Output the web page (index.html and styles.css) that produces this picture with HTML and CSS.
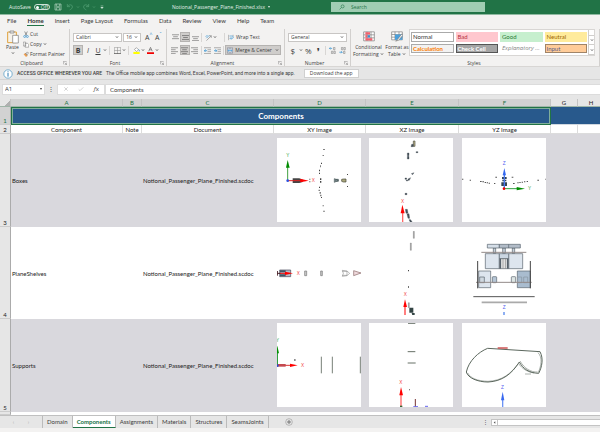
FILE: index.html
```html
<!DOCTYPE html>
<html lang="en">
<head>
<meta charset="utf-8">
<title>Notional_Passenger_Plane_Finished.xlsx</title>
<link rel="stylesheet" href="styles.css">
</head>
<body>
<svg class="defs" aria-hidden="true">
  <symbol id="chev" viewBox="0 0 9 9"><path d="M2 3l2.5 3L7 3" fill="none" stroke="currentColor" stroke-width="1.5"/></symbol>
  <symbol id="launch" viewBox="0 0 12 12"><path d="M1 10V1h10M5 5l5 5M11 5v6H5" fill="none" stroke="#777" stroke-width="1.5"/></symbol>
  <symbol id="lines-t" viewBox="0 0 18 18"><path d="M0 2h18M3 7h12M0 12h18" stroke="#666" stroke-width="1.6"/></symbol>
  <symbol id="lines-m" viewBox="0 0 18 18"><path d="M0 4h18M3 9h12M0 14h18" stroke="#555" stroke-width="1.6"/></symbol>
  <symbol id="lines-b" viewBox="0 0 18 18"><path d="M0 7h18M3 12h12M0 17h18" stroke="#666" stroke-width="1.6"/></symbol>
  <symbol id="lines-l" viewBox="0 0 18 18"><path d="M0 2h18M0 7h12M0 12h18M0 17h12" stroke="#666" stroke-width="1.6"/></symbol>
  <symbol id="lines-c" viewBox="0 0 18 18"><path d="M0 2h18M3 7h12M0 12h18M3 17h12" stroke="#555" stroke-width="1.6"/></symbol>
  <symbol id="lines-r" viewBox="0 0 18 18"><path d="M0 2h18M6 7h12M0 12h18M6 17h12" stroke="#666" stroke-width="1.6"/></symbol>
  <symbol id="indent-out" viewBox="0 0 18 18"><path d="M0 2h18M9 7h9M9 12h9M0 17h18" stroke="#777" stroke-width="1.5"/><path d="M8 9.500H1M4 6L1 9.500 4 13" fill="none" stroke="#2e8fd0" stroke-width="2"/></symbol>
  <symbol id="indent-in" viewBox="0 0 18 18"><path d="M0 2h18M9 7h9M9 12h9M0 17h18" stroke="#777" stroke-width="1.5"/><path d="M0 9.500h7M4 6l3 3.500L4 13" fill="none" stroke="#2e8fd0" stroke-width="2"/></symbol>
</svg>

<header class="titlebar">
  <label class="autosave">AutoSave <input type="checkbox" class="sr" aria-label="AutoSave"><span class="toggle">Off</span></label>
  <button class="tbtn" aria-label="Save"><svg viewBox="0 0 24 24"><path d="M3 3h18v18H3zM7 3v7h10V3M7 21v-7h10v7" fill="none" stroke="#b9d8c6" stroke-width="2"/></svg></button>
  <button class="tbtn more" aria-label="Undo"><svg viewBox="0 0 24 24"><path d="M4 3v8h8M4 11C9 3 20 4 19 12c0 4-4 7-8 9" fill="none" stroke="#4d9a70" stroke-width="2.500"/></svg><svg class="ch"><use href="#chev"/></svg></button>
  <button class="tbtn more" aria-label="Redo"><svg viewBox="0 0 24 24"><path d="M20 3v8h-8M20 11C15 3 4 4 5 12c0 4 4 7 8 9" fill="none" stroke="#4d9a70" stroke-width="2.500"/></svg><svg class="ch"><use href="#chev"/></svg></button>
  <button class="tbtn" aria-label="Customize"><svg viewBox="0 0 24 24"><path d="M8 8h8M8 12h8l-4 5z" fill="#d5e8dd" stroke="#d5e8dd"/></svg></button>
  <div class="doc">Notional_Passenger_Plane_Finished.xlsx <span class="tri"></span></div>
  <label class="search"><svg viewBox="0 0 20 20"><path d="M2 18l6-6" stroke="#217346" stroke-width="2"/><circle cx="12" cy="8" r="5" fill="none" stroke="#217346" stroke-width="2"/></svg><input type="search" placeholder="Search" aria-label="Search"></label>
</header>

<nav class="tabs">
  <a href="#">File</a><a href="#" class="on">Home</a><a href="#">Insert</a><a href="#">Page Layout</a><a href="#">Formulas</a><a href="#">Data</a><a href="#">Review</a><a href="#">View</a><a href="#">Help</a><a href="#">Team</a>
</nav>

<section class="ribbon">
  <div class="group clip">
    <div class="body">
      <button class="paste"><svg class="big" viewBox="0 0 36 42"><path d="M2 6h26v32H2z" fill="#f6f2ea" stroke="#dfa23c" stroke-width="3"/><path d="M9 3h12v6H9z" fill="#eee" stroke="#777" stroke-width="2"/><path d="M17 16h17v23H17z" fill="#fff" stroke="#777" stroke-width="2"/></svg><span>Paste</span><svg class="ch"><use href="#chev"/></svg></button>
      <div class="stack">
        <button><svg class="ic" viewBox="0 0 18 20"><path d="M5 1l6 12M13 1L7 13" stroke="#666" stroke-width="2"/><circle cx="5" cy="16" r="3" fill="none" stroke="#2e8fd0" stroke-width="2"/><circle cx="13" cy="16" r="3" fill="none" stroke="#2e8fd0" stroke-width="2"/></svg>Cut</button>
        <button><svg class="ic" viewBox="0 0 20 20"><path d="M1 2h8v13H1zM7 6h8l4 4v9H7z" fill="#fff" stroke="#666" stroke-width="1.600"/></svg>Copy <svg class="ch"><use href="#chev"/></svg></button>
        <button><svg class="ic" viewBox="0 0 20 20"><path d="M2 9l8 9 5-4-7-9z" fill="#f0a050"/><path d="M7 6l8 8M10 7l3-5 5 2-3 6z" fill="#fff" stroke="#666" stroke-width="1.600"/></svg>Format Painter</button>
      </div>
    </div>
    <div class="cap"><span>Clipboard</span><svg><use href="#launch"/></svg></div>
  </div>

  <div class="group font">
    <div class="body rows">
      <div class="row">
        <span class="combo face"><select aria-label="Font"><option>Calibri</option></select><svg class="ch"><use href="#chev"/></svg></span>
        <span class="combo size"><select aria-label="Font size"><option>16</option></select><svg class="ch"><use href="#chev"/></svg></span>
        <button class="b10 grow">A<sup>^</sup></button><button class="b10 shrink">A<sup>ˇ</sup></button>
      </div>
      <div class="row">
        <button class="b10 pressed"><b>B</b></button><button class="b10"><i>I</i></button><button class="b10"><u>U</u></button><svg class="ch"><use href="#chev"/></svg><i class="sep"></i>
        <button class="b10" aria-label="Borders"><svg viewBox="0 0 20 20"><path d="M1 1h18v17M10 1v18M1 10h18M1 1v18" fill="none" stroke="#888" stroke-width="1.500"/><path d="M0 19h20" stroke="#333" stroke-width="2"/></svg></button><svg class="ch"><use href="#chev"/></svg><i class="sep"></i>
        <button class="b10" aria-label="Fill color"><svg viewBox="0 0 20 20"><path d="M4 7l6-5 6 6-6 5z" fill="#fff" stroke="#777" stroke-width="1.600"/><path d="M16 7c3 3 3 5 1 6" fill="none" stroke="#2e8fd0" stroke-width="2"/><path d="M1 14h18v6H1z" fill="#ff0"/></svg></button><svg class="ch"><use href="#chev"/></svg>
        <button class="b10" aria-label="Font color"><svg viewBox="0 0 20 20"><path d="M5 12l5-11 5 11M7 8h6" fill="none" stroke="#666" stroke-width="2"/><path d="M0 15h20v5H0z" fill="#f00000"/></svg></button><svg class="ch"><use href="#chev"/></svg>
      </div>
    </div>
    <div class="cap"><span>Font</span><svg><use href="#launch"/></svg></div>
  </div>

  <div class="group align">
    <div class="body rows">
      <div class="row">
        <button class="b10" aria-label="Top align"><svg><use href="#lines-t"/></svg></button><button class="b10 pressed" aria-label="Middle align"><svg><use href="#lines-m"/></svg></button><button class="b10" aria-label="Bottom align"><svg><use href="#lines-b"/></svg></button><i class="sep"></i>
        <button class="b10" aria-label="Orientation"><svg viewBox="0 0 20 20"><path d="M4 19L18 5M12 5h6v6" fill="none" stroke="#888" stroke-width="2"/><path d="M2 8l5-5M4 12l8-8" stroke="#2e8fd0" stroke-width="2"/></svg></button><svg class="ch"><use href="#chev"/></svg><i class="sep push"></i>
        <button class="wide"><svg class="ic" viewBox="0 0 20 20"><path d="M2 1v18M17 1v5" stroke="#777" stroke-width="1.600"/><path d="M5 5h9c5 0 5 8 0 8H8M11 9l-4 4 4 4" fill="none" stroke="#2e8fd0" stroke-width="2"/></svg>Wrap Text</button>
      </div>
      <div class="row">
        <button class="b10" aria-label="Align left"><svg><use href="#lines-l"/></svg></button><button class="b10 pressed" aria-label="Center"><svg><use href="#lines-c"/></svg></button><button class="b10" aria-label="Align right"><svg><use href="#lines-r"/></svg></button><i class="sep"></i>
        <button class="b10" aria-label="Decrease indent"><svg><use href="#indent-out"/></svg></button><button class="b10" aria-label="Increase indent"><svg><use href="#indent-in"/></svg></button><i class="sep"></i>
        <button class="wide pressed"><svg class="ic" viewBox="0 0 20 20"><path d="M1 1h18v18H1zM1 5h18M1 15h18M10 1v4M10 15v4" fill="#e8f3fa" stroke="#667" stroke-width="1.500"/><path d="M3 10h14M6 7l-3 3 3 3M14 7l3 3-3 3" fill="none" stroke="#2e8fd0" stroke-width="2"/></svg>Merge &amp; Center <svg class="ch"><use href="#chev"/></svg></button>
      </div>
    </div>
    <div class="cap"><span>Alignment</span><svg><use href="#launch"/></svg></div>
  </div>

  <div class="group number">
    <div class="body rows">
      <div class="row"><span class="combo fmt"><select aria-label="Number format"><option>General</option></select><svg class="ch"><use href="#chev"/></svg></span></div>
      <div class="row">
        <button class="b10 glyph">$</button><svg class="ch wide-ch"><use href="#chev"/></svg><button class="b10 glyph">%</button><button class="b10 glyph"><b>❜</b></button><i class="sep"></i>
        <button class="b10" aria-label="Increase decimal"><svg viewBox="0 0 20 20"><path d="M9 4H1M4 1L1 4l3 3" fill="none" stroke="#2e8fd0" stroke-width="2"/><path d="M13 1h4v7h-4zM7 12h4v7H7zM14 12h4v7h-4z" fill="none" stroke="#777" stroke-width="1.500"/></svg></button>
        <button class="b10" aria-label="Decrease decimal"><svg viewBox="0 0 20 20"><path d="M1 15h8M6 12l3 3-3 3" fill="none" stroke="#2e8fd0" stroke-width="2"/><path d="M7 1h4v7H7zM14 1h4v7h-4zM13 12h4v7h-4z" fill="none" stroke="#777" stroke-width="1.500"/></svg></button>
      </div>
    </div>
    <div class="cap"><span>Number</span><svg><use href="#launch"/></svg></div>
  </div>

  <div class="group styles">
    <div class="body">
      <button class="tall"><svg viewBox="0 0 36 32"><path d="M2 2h32v27H2zM2 11h32M2 20h32M12 2v27M24 2v27" fill="#fff" stroke="#777" stroke-width="2"/><path d="M7 3h14v7H7zM7 21h21v7H7z" fill="#f4606c"/><path d="M7 12h7v7H7z" fill="#f4606c"/><path d="M14 12h7v7h-7z" fill="#3c8fd0"/></svg><span>Conditional<br>Formatting <svg class="ch"><use href="#chev"/></svg></span></button>
      <button class="tall table"><svg viewBox="0 0 36 32"><path d="M2 2h32v24H2zM2 10h32M2 18h32M12 2v24M24 2v24" fill="#fff" stroke="#777" stroke-width="2"/><path d="M12 10h22v16H12z" fill="#4aa0dc"/><path d="M33 8L20 24l-6 6 9-3L35 13z" fill="#fff" stroke="#777" stroke-width="2"/></svg><span>Format as<br>Table <svg class="ch"><use href="#chev"/></svg></span></button>
      <div class="gallery">
        <div class="cells">
          <button class="s-normal">Normal</button><button class="s-bad">Bad</button><button class="s-good">Good</button><button class="s-neutral">Neutral</button>
          <button class="s-calc">Calculation</button><button class="s-check">Check Cell</button><button class="s-expl">Explanatory ...</button><button class="s-input">Input</button>
        </div>
        <div class="scroll"><button aria-label="Previous styles"></button><button aria-label="Next styles"><svg class="ch"><use href="#chev"/></svg></button><button aria-label="More styles"><svg class="ch"><use href="#chev"/></svg></button></div>
      </div>
    </div>
    <div class="cap"><span>Styles</span></div>
  </div>
</section>

<aside class="notice">
  <svg viewBox="0 0 30 30"><circle cx="15" cy="15" r="12.500" fill="#fff" stroke="#3c8fc0" stroke-width="2"/><path d="M15 7v3M15 12v11" stroke="#2878b0" stroke-width="3"/></svg>
  <strong>ACCESS OFFICE WHEREVER YOU ARE</strong>
  <span>The Office mobile app combines Word, Excel, PowerPoint, and more into a single app.</span>
  <button>Download the app</button>
</aside>

<section class="formula">
  <label class="name"><input value="A1" aria-label="Name box"><span class="tri"></span></label>
  <span class="dots">⋮</span>
  <div class="fx"><button aria-label="Cancel"><svg viewBox="0 0 18 18"><path d="M4 4l10 10M14 4L4 14" stroke="#bbb" stroke-width="2"/></svg></button><button aria-label="Enter"><svg viewBox="0 0 18 18"><path d="M2 10l4 4L16 4" fill="none" stroke="#bbb" stroke-width="2"/></svg></button><button><i>f</i>x</button></div>
  <input class="entry" value="Components" aria-label="Formula bar">
</section>

<main>
<table class="sheet">
  <colgroup><col class="c-row"><col class="c-a"><col class="c-b"><col class="c-c"><col class="c-d"><col class="c-e"><col class="c-f"><col class="c-g"><col></colgroup>
  <thead><tr><th class="corner"></th><th class="sel">A</th><th class="sel">B</th><th class="sel">C</th><th class="sel">D</th><th class="sel">E</th><th class="sel">F</th><th>G</th><th>H</th></tr></thead>
  <tbody>
    <tr class="banner"><th class="sel">1</th><td colspan="6" class="active">Components</td><td></td><td></td></tr>
    <tr class="heads"><th>2</th><td>Component</td><td>Note</td><td>Document</td><td>XY Image</td><td>XZ Image</td><td>YZ Image</td><td></td><td></td></tr>
    <tr class="item odd"><th>3</th><td>Boxes</td><td></td><td>Notional_Passenger_Plane_Finished.scdoc</td>
      <td class="pic"><svg viewBox="21 24 252 252">
        <g fill="#444"><path d="M160 57h4v3h-4zM158 75h3v3h-3zM153 98h3v4h-3zM151 106h2v6h-2zM147 119h3v5h-3zM147 128h3v4h-3zM150 145h4v5h-4zM150 153h4v5h-4zM147 170h3v4h-3zM146 179h3v4h-3zM149 186h3v5h-3zM151 194h3v5h-3zM153 201h3v3h-3zM158 226h3v3h-3zM160 242h4v3h-4zM118 146h3v3h-3zM118 154h3v3h-3zM231 132h3v3h-3zM231 168h3v3h-3z"/></g>
        <path d="M68 145h20l10 4v7l-10 3H68z" fill="#444"/><path d="M193 146l12 5-12 6zM197 148h8v6h-8z" fill="#9aa7ae" stroke="#455" stroke-width="2"/><path d="M215 148l5-1h8v9h-8l-5-2z" fill="#aaa77c" stroke="#443" stroke-width="2"/>
        <path d="M53 152v-42" stroke="#40a040" stroke-width="3"/><path d="M48 113l5-23 6 23z" fill="#008c00"/><path d="M53 152h40" stroke="#e02020" stroke-width="3"/><path d="M91 146l25 6-25 5z" fill="#f00"/><circle cx="53" cy="152" r="4" fill="#2b50e0"/>
        <text class="y" x="49" y="80">Y</text><text class="x" x="125" y="156">X</text></svg></td>
      <td class="pic"><svg viewBox="297 24 252 252">
        <path d="M430 33h5v16h-5z" fill="#b8b08a" stroke="#554" stroke-width="2"/><path d="M425 43h5v7h-7zM438 65h6v3h-6zM412 69h5v8h-5zM412 79h5v8h-5zM405 144h5v4h-5zM409 150h4v3h-4zM414 147l8-4-4 8h-4zM424 131l8-3-4 6zM405 190h6v4h-6zM406 238h6l2 12h-6zM411 252l6-1 2 14h-5zM417 269h5l5 8h-6z" fill="#455058" stroke="#455058"/>
        <path d="M398 276v-32" stroke="#f66" stroke-width="4"/><path d="M392 250l5-26 7 26z" fill="#f00"/><text class="x" x="393" y="218">X</text></svg></td>
      <td class="pic"><svg viewBox="96 24 252 252">
        <path d="M96 146h4v3h-4zM119 149h4v3h-4zM150 153h5v3h-5zM157 154h5v3h-5zM164 156h4v3h-4zM170 157h4v3h-4zM176 158h4v3h-4zM192 159h4v3h-4zM196 140h5v3h-5zM245 140h5v3h-5zM249 159h5v3h-5zM262 157h4v3h-4zM268 156h4v3h-4zM275 155h4v3h-4zM282 154h4v3h-4zM290 153h4v3h-4zM322 149h5v3h-5zM346 146h3v3h-3z" fill="#555"/>
        <path d="M216 141h14v6h-14zM217 149h12v5h-12zM214 157h17v11h-17z" fill="#345"/><path d="M223 174v-42" stroke="#4878f0" stroke-width="4"/><path d="M218 136l5-22 5 22z" fill="#3468f0"/><path d="M223 176h40" stroke="#30a040" stroke-width="3"/><path d="M260 171l25 5-25 5z" fill="#008c00"/><circle cx="222" cy="176" r="4" fill="#e00"/>
        <text class="z" x="218" y="106">Z</text><text class="y" x="294" y="181">Y</text></svg></td><td></td><td></td></tr>
    <tr class="item"><th>4</th><td>PlaneShelves</td><td></td><td>Notional_Passenger_Plane_Finished.scdoc</td>
      <td class="pic"><svg viewBox="21 17 252 252">
        <path d="M29 134h33v20H29z" fill="#b4bcc8" stroke="#445" stroke-width="2"/><path d="M30 135h17v6H30zM30 147h17v6H30z" fill="#456"/><path d="M22 137v14M22 144h10" stroke="#401820" stroke-width="3"/><path d="M30 144h22" stroke="#e11" stroke-width="3"/><path d="M45 139l24 5-24 5z" fill="#f00"/>
        <path d="M104 137h6v14h-6zM152 137h5v14h-5z" fill="#ccc" stroke="#777" stroke-width="2"/><path d="M217 135l14 2 8 7-8 7-14 2 3-9zM217 138h14v12h-14" fill="#fff" stroke="#777" stroke-width="1.500"/><path d="M251 136l22 7-22 8z" fill="#efd9dc" stroke="#866" stroke-width="2"/><text class="x" x="80" y="149">X</text></svg></td>
      <td class="pic"><svg viewBox="297 17 252 252">
        <path d="M430 18h3v21h-3zM421 53h3v22h-3zM415 232h3v15h-3z" fill="#999" stroke="#777"/><path d="M414 134h3v4h-3zM414 183h3v4h-3z" fill="#444"/><path d="M418 247h12v15h-12zM425 263h9v7h-7z" fill="#344"/><path d="M405 269v-29" stroke="#f66" stroke-width="5"/><path d="M400 245l5-23 6 23z" fill="#f00"/><text class="x" x="401" y="212">X</text></svg></td>
      <td class="pic"><svg viewBox="96 17 252 252">
        <g stroke="#56616b" stroke-width="2"><path d="M190 68h7v16h-7zM218 68h8v16h-8zM247 68h7v16h-7z" fill="#c8d2dc"/><path d="M172 57h36v11h-36z" fill="#d5dee8"/><path d="M208 57h63v11h-63z" fill="#b2bcc8"/><path d="M236 57v11" /><path d="M166 85h42v45h-42zM236 85h42v45h-42z" fill="#dde5ee"/><path d="M208 85h28v15h-28z" fill="#cbd6e2"/><path d="M208 100h28v30h-28z" fill="#eee"/><path d="M211 100v30M233 100v30" stroke-width="5"/><path d="M219 100v30M226 100v30" stroke="#777"/>
        <path d="M146 137h36v50h-36z" fill="#dde5ee"/><path d="M262 137h39v50h-39z" fill="#a9bccf"/><path d="M149 155h14v17h-14z" fill="#cfd8e0"/><rect x="187" y="154" width="13" height="18" rx="2" fill="#b6c6d6"/><rect x="244" y="154" width="13" height="18" rx="2" fill="#dde5e4"/><path d="M263 155h12v17h-12zM281 155h12v17h-12z" fill="#a9bccf" stroke="#8895a0"/></g>
        <path d="M154 81h135M138 171h167" stroke="#928a88" stroke-width="3"/><path d="M143 107v82M301 107v82" stroke="#444" stroke-width="3"/><path d="M130 214h184" stroke="#555" stroke-width="3"/><path d="M155 231h136" stroke="#aaa" stroke-width="5"/><text class="z" x="218" y="250">Z</text><path d="M222 260v10" stroke="#78a0f0" stroke-width="5"/></svg></td><td></td><td></td></tr>
    <tr class="item odd"><th>5</th><td>Supports</td><td></td><td>Notional_Passenger_Plane_Finished.scdoc</td>
      <td class="pic"><svg viewBox="21 16 252 252">
        <path d="M154 117v50M187 117v50M271 117v50" stroke="#788078" stroke-width="3"/><path d="M72 125h5v4h-5z" fill="#666"/><path d="M22 143v-40" stroke="#30a040" stroke-width="4"/><path d="M17 107l5-23 5 23z" fill="#009000"/><path d="M22 143h40" stroke="#d33" stroke-width="3"/><path d="M24 139h23v8H24z" fill="#c44a50"/><path d="M60 138l23 5-23 5z" fill="#f00"/><circle cx="22" cy="144" r="4" fill="#34c"/><text class="y" x="18" y="72">Y</text><text class="x" x="93" y="148">X</text></svg></td>
      <td class="pic"><svg viewBox="297 16 252 252">
        <path d="M414 17h22M413 102h23M413 136h24" stroke="#677067" stroke-width="3"/><path d="M417 215h3v3h-3z" fill="#555"/><path d="M436 244v23" stroke="#733" stroke-width="3"/><path d="M430 267h14M465 266h9" stroke="#66e" stroke-width="3"/><path d="M393 267v-36" stroke="#f66" stroke-width="4"/><path d="M388 233l5-25 6 25z" fill="#f00"/><path d="M390 266h7" stroke="#363" stroke-width="4"/><text class="x" x="388" y="199">X</text></svg></td>
      <td class="pic"><svg viewBox="96 16 252 252">
        <g fill="none" stroke="#5b675d"><path d="M173 92C145 103 116 130 109 163C114 181 143 193 174 193C217 191 245 169 268 133C279 153 297 166 326 167C336 148 341 123 330 102Z" stroke-width="3"/><path d="M266 138C276 153 292 163 312 166M270 130C283 152 302 164 323 163M324 105C338 119 334 144 325 164M113 166C122 182 142 190 174 191C215 189 241 170 263 140M285 169h18" stroke-width="1.500"/></g>
        <path d="M203 91h30" stroke="#c84040" stroke-width="4"/><path d="M218 268v-25" stroke="#6c94f5" stroke-width="4"/><path d="M213 248l5-26 5 26z" fill="#3868f0"/><text class="z" x="213" y="214">Z</text></svg></td><td></td><td></td></tr>
    <tr class="tail"><th></th><td></td><td></td><td></td><td></td><td></td><td></td><td></td><td></td></tr>
  </tbody>
</table>
</main>

<footer>
  <div class="sheets">
    <div class="arrows"><button aria-label="Previous sheet">‹</button><button aria-label="Next sheet">›</button></div>
    <a href="#">Domain</a><a href="#" class="on">Components</a><a href="#">Assignments</a><a href="#">Materials</a><a href="#">Structures</a><a href="#">SeamsJoints</a>
    <button class="add" aria-label="New sheet"><svg viewBox="0 0 24 24"><circle cx="12" cy="12" r="10" fill="none" stroke="#888" stroke-width="1.500"/><path d="M12 6v12M6 12h12" stroke="#666" stroke-width="2.500"/></svg></button>
    <span class="dots">⋮</span>
    <div class="hscroll"><button aria-label="Scroll left"><svg viewBox="0 0 12 12"><path d="M8 3v6L4 6z" fill="#555"/></svg></button></div>
  </div>
  <div class="status"></div>
</footer>
</body>
</html>
```
FILE: styles.css
```css
* { box-sizing: border-box; }
body { margin: 0; min-height: 100vh; display: flex; flex-direction: column; overflow: hidden; background: #e6e6e6; color: #3c3c3c; font: 5px/7px "Open Sans", "Noto Sans", sans-serif; }
button, input, select { font: inherit; color: inherit; margin: 0; padding: 0; border: 0; background: none; appearance: none; outline: 0; min-width: 0; border-radius: 0; }
button { display: flex; align-items: center; white-space: nowrap; }
a { color: inherit; text-decoration: none; }
svg { display: block; flex: none; }
.defs { position: absolute; width: 0; height: 0; }
.sr { position: absolute; opacity: 0; }
.ch { width: 4px; height: 4px; }
.tri { display: inline-block; border: 1px solid transparent; border-top: 2px solid currentColor; border-bottom: 0; }

.titlebar { display: flex; align-items: center; height: 15px; padding-left: 9px; background: #217346; border-bottom: 1px solid #8fb9a1; color: #e4f0e9; }
.autosave { display: flex; align-items: center; gap: 3px; width: 45px; }
.toggle { display: flex; align-items: center; width: 16px; height: 6px; border: 1px solid #cfe3d8; border-radius: 3px; }
.toggle::before { content: ""; width: 3px; height: 3px; margin: 0 2px 0 1px; border-radius: 50%; background: #fff; }
.tbtn { width: 12px; color: #4d9a70; }
.tbtn.more { gap: 2px; width: 16px; }
.tbtn svg:first-child { width: 8px; height: 8px; }
.doc { display: flex; align-items: center; gap: 3px; width: 150px; margin-left: auto; }
.search { display: flex; align-items: center; gap: 6px; width: 154px; height: 10px; margin: 0 115px 0 9px; padding-left: 8px; background: #a0cdb3; color: #217346; }
.search svg { width: 6px; height: 6px; }
.search input { flex: 1; }
.search input::placeholder { color: #217346; opacity: 1; }

.tabs { display: flex; gap: 11px; height: 12px; padding: 1px 7px 0; background: #f3f2f1; font-family: Lato, sans-serif; font-size: 6px; line-height: 9px; }
.tabs .on { height: 10px; border-bottom: 1px solid #217346; color: #333; font-weight: 700; }

.ribbon { display: flex; height: 40px; padding-top: 2px; background: #f3f2f1; border-bottom: 1px solid #d8d6d4; }
.group { display: flex; flex-direction: column; border-right: 1px solid #d2d0ce; }
.clip { width: 70px; }
.font { width: 97px; }
.align { width: 118px; }
.number { width: 66px; }
.styles { flex: 1; }
.body { display: flex; flex: 1; }
.cap { display: flex; align-items: center; height: 6px; padding-right: 2px; }
.cap span { flex: 1; text-align: center; }
.cap svg { width: 4px; height: 4px; }
.paste { flex-direction: column; width: 23px; padding-left: 2px; }
.big { width: 12px; height: 14px; margin-top: 1px; }
.stack { display: flex; flex-direction: column; }
.stack button { height: 10px; gap: 1px; }
.ic { width: 6px; height: 7px; }
.rows { flex-direction: column; gap: 3px; padding: 3px 3px 0; }
.row { display: flex; align-items: center; height: 10px; }
.combo { display: flex; align-items: center; height: 9px; padding: 0 2px; background: #fff; border: 1px solid #c8c6c4; }
.combo select { flex: 1; }
.face { width: 51px; margin-right: 1px; }
.size { width: 18px; margin-right: 3px; }
.fmt { width: 59px; }
.b10 { justify-content: center; width: 10px; height: 10px; font-size: 7px; }
.b10 svg { width: 7px; height: 7px; }
.b10 sup { font-size: 5px; line-height: 5px; align-self: flex-start; color: #2e8fd0; }
.pressed { background: #cfcdcb; border: 1px solid #b5b3b1; }
.sep { width: 1px; height: 9px; margin: 0 1px; background: #d8d6d4; }
.font .sep, .number .sep { margin: 0 2px; }
.sep.push { margin-left: 7px; }
.wide-ch { margin: 0 1px; }
.wide { gap: 2px; height: 10px; padding: 0 1px; border: 1px solid transparent; }
.wide.pressed { border-color: #b5b3b1; }
.wide .ch { margin: 0 1px; }
.glyph { font-size: 8px; }
.tall { flex-direction: column; width: 35px; padding-top: 2px; }
.tall.table { width: 22px; }
.tall > svg { width: 12px; height: 11px; margin-bottom: 2px; }
.tall span { text-align: center; }
.tall span svg { display: inline-block; }
.styles .body { padding-right: 4px; }
.gallery { display: flex; flex: 1; align-self: flex-start; height: 27px; margin-left: 1px; background: #fff; border: 1px solid #d8d6d4; font-family: Lato, sans-serif; }
.cells { display: grid; flex: 1; grid-template-columns: repeat(4, 1fr); gap: 2px; padding: 2px 1px; }
.cells button { padding: 0 1px; font-size: 6px; border: 1px solid transparent; }
.cells .s-normal { border-color: #aaa; color: #333; }
.cells .s-bad { background: #ffc7ce; color: #b5323e; }
.cells .s-good { background: #c6efce; color: #267a35; }
.cells .s-neutral { background: #ffeb9c; color: #9c6500; }
.cells .s-calc { background: #f2f2f2; border-color: #aaa; color: #fa7d00; font-weight: 700; }
.cells .s-check { background: #a5a5a5; border-color: #555; color: #fff; font-weight: 700; }
.cells .s-expl { color: #7f7f7f; font-family: "Open Sans", sans-serif; font-style: italic; }
.cells .s-input { background: #ffcc99; border-color: #a08468; color: #5b5b86; }
.scroll { display: grid; width: 6px; border-left: 1px solid #d0cecc; }
.scroll button { border-bottom: 1px solid #d0cecc; justify-content: center; }

.notice { display: flex; align-items: center; gap: 4px; height: 13px; padding: 1px 0 0 3px; background: #e6e6e6; border-bottom: 1px solid #d4d4d4; font-family: Roboto, sans-serif; }
.notice svg { width: 10px; height: 10px; }
.notice strong { font-weight: 500; }
.notice button { height: 9px; margin-left: 5px; padding: 0 5px; background: #fff; border: 1px solid #d0d0d0; font-family: "Open Sans", sans-serif; }

.formula { display: flex; align-items: center; height: 19px; padding: 0 0 1px 2px; font-size: 6px; }
.formula > * { height: 11px; background: #fff; border: 1px solid #dcdcdc; }
.formula .name { display: flex; align-items: center; width: 43px; padding: 0 2px; }
.name input { flex: 1; }
.formula .dots { width: 12px; background: none; border: 0; text-align: center; line-height: 11px; }
.fx { display: flex; width: 48px; }
.fx button { flex: 1; justify-content: center; }
.fx svg { width: 6px; height: 6px; }
.formula .entry { flex: 1; padding-left: 4px; border-right: 0; font-family: Lato, sans-serif; }

main { overflow: hidden; }
.sheet { width: 100%; min-width: 605px; table-layout: fixed; border-collapse: separate; border-spacing: 0; color: #222; font-family: Lato, sans-serif; font-size: 6px; }
.c-row { width: 11px; } .c-a { width: 112px; } .c-b { width: 19px; } .c-c { width: 132px; }
.c-d { width: 92px; } .c-e { width: 93px; } .c-f { width: 92px; } .c-g { width: 27px; }
.sheet th, .sheet td { padding: 0; overflow: hidden; white-space: nowrap; }
.sheet thead th { height: 8px; background: #e6e6e6; border-right: 1px solid #c4c4c4; border-bottom: 1px solid #9fb5a8; font-weight: 400; line-height: 7px; }
.sheet thead .sel { background: #d2d2d2; color: #217346; }
.sheet tbody th { background: #e6e6e6; border-right: 1px solid #ababab; border-bottom: 1px solid #ccc; vertical-align: bottom; font-weight: 400; }
.sheet tbody .sel { background: #d2d2d2; color: #217346; }
.sheet thead .corner { background: linear-gradient(135deg, #e6e6e6 65%, #b0b0b0 65%); }
.banner { height: 18px; }
.banner td { background: #28598c; border-bottom: 1px solid #d0d8e0; }
.banner .active { border: 1px solid #217346; box-shadow: inset 0 0 0 1px #7fae9a; color: #fff; font-size: 8px; font-weight: 700; text-align: center; }
.heads { height: 9px; }
.heads td { background: #fff; border-right: 1px solid #dcdcdc; border-bottom: 1px solid #dcdcdc; text-align: center; }
.item { height: 92px; }
.item.odd { height: 93px; }
.item td { background: #fff; padding: 0 1px; vertical-align: middle; }
.item td.pic { padding: 4px 0 0 3px; vertical-align: top; }
.item.odd td { background: #d9d8dd; }
.item svg { width: 84px; height: 84px; background: #fff; }
.item text { font: 14px "Liberation Sans", sans-serif; }
.x { fill: #f04040; } .y { fill: #30a040; } .z { fill: #5560f0; }
.tail { height: 3px; }
.tail td { background: #fff; }

footer { margin-top: auto; }
.sheets { display: flex; height: 13px; border-top: 1px solid #c0c0c0; font-family: Lato, sans-serif; line-height: 12px; }
.arrows { display: flex; justify-content: space-around; width: 43px; padding: 0 6px; border-right: 1px solid #bbb; color: #aaa; }
.sheets a { padding: 0 4px; border-right: 1px solid #bbb; font-size: 6px; }
.sheets .on { background: #fff; color: #217346; font-weight: 700; border-bottom: 1px solid #217346; line-height: 11px; }
.add { margin-left: 16px; }
.add svg { width: 8px; height: 8px; }
.sheets .dots { margin-left: auto; width: 8px; }
.hscroll { width: 109px; height: 7px; margin: 3px 0; background: #fff; border: 1px solid #c4c4c4; border-right: 0; }
.hscroll button { width: 6px; height: 5px; border-right: 1px solid #c4c4c4; }
.hscroll svg { width: 5px; height: 5px; }
.status { height: 4px; background: #f3f2f1; }
```
